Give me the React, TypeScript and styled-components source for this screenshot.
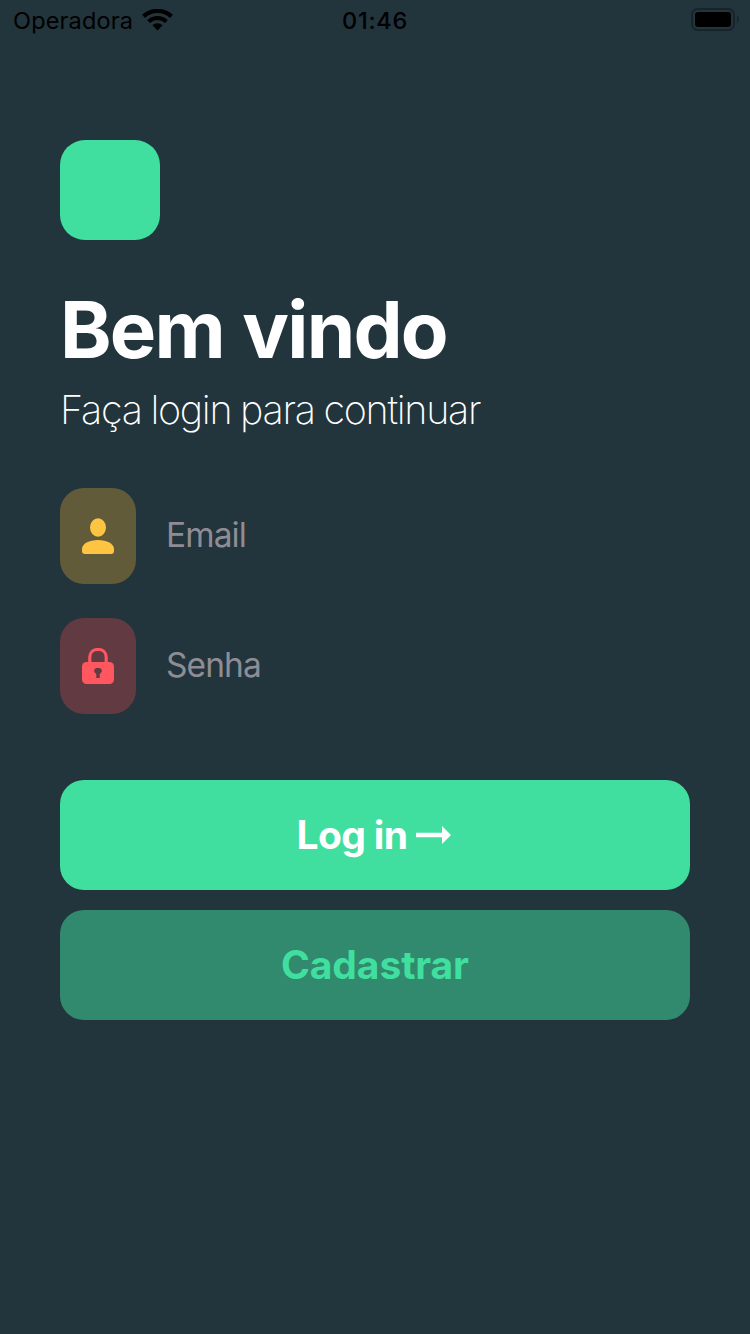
import React from "react";
import styled, { createGlobalStyle } from "styled-components";

const GlobalStyle = createGlobalStyle`
  *, *::before, *::after { box-sizing: border-box; }
  body {
    margin: 0;
    background: #22343c;
    font-family: Inter, "Liberation Sans", sans-serif;
  }
`;

const Screen = styled.div`
  display: flex;
  flex-direction: column;
  width: 750px;
  height: 1334px;
  background: #22343c;
  overflow: hidden;
`;

const StatusBar = styled.header`
  display: grid;
  grid-template-columns: 1fr auto 1fr;
  align-items: center;
  height: 40px;
  padding: 0 11px 0 13px;
  color: #000;
  line-height: 40px;
`;

const Carrier = styled.div`
  display: flex;
  align-items: center;
  gap: 9px;
  font-size: 23.5px;
  letter-spacing: 0.17px;
  padding-top: 1px;

  svg {
    margin-bottom: 2px;
  }
`;

const Clock = styled.time`
  font-size: 23.5px;
  font-weight: 550;
  letter-spacing: 0.7px;
  padding-top: 1px;
  margin-right: 2px;
`;

const BatterySlot = styled.div`
  display: flex;
  justify-content: flex-end;
  padding-bottom: 1px;
`;

const Content = styled.main`
  display: flex;
  flex-direction: column;
  padding: 100px 60px 0;
`;

const Logo = styled.div`
  width: 100px;
  height: 100px;
  border-radius: 25px;
  background: #40df9f;
`;

const Title = styled.h1`
  margin: 42px 0 0;
  color: #fff;
  font-size: 78px;
  font-weight: 700;
  line-height: 95px;
  letter-spacing: -1.75px;
  word-spacing: 1.5px;
`;

const Subtitle = styled.p`
  margin: 9px 0 0;
  color: #fff;
  font-size: 39.5px;
  font-weight: 180;
  line-height: 48px;
  letter-spacing: -1.3px;
  word-spacing: -1px;
  white-space: nowrap;
`;

const Form = styled.form`
  display: flex;
  flex-direction: column;
  margin-top: 54px;
`;

const Fields = styled.div`
  display: flex;
  flex-direction: column;
  gap: 34px;
`;

const Field = styled.label`
  display: flex;
  align-items: center;
  gap: 30px;
  height: 96px;
`;

const IconTile = styled.span<{ $fill: string }>`
  display: flex;
  align-items: center;
  justify-content: center;
  flex: none;
  width: 76px;
  height: 96px;
  border-radius: 24px;
  background: ${({ $fill }) => $fill};
`;

const Input = styled.input`
  flex: 1;
  min-width: 0;
  height: 96px;
  padding: 0 0 2px;
  border: 0;
  outline: 0;
  background: transparent;
  color: #fff;
  font-family: inherit;
  font-size: 33.5px;
  letter-spacing: -0.9px;

  &::placeholder {
    color: #8e8c94;
    opacity: 1;
  }
`;

const Actions = styled.div`
  display: flex;
  flex-direction: column;
  gap: 20px;
  margin-top: 66px;
`;

const Button = styled.button<{ $secondary?: boolean }>`
  display: flex;
  align-items: center;
  justify-content: center;
  gap: 9px;
  height: 110px;
  padding: 0 ${({ $secondary }) => ($secondary ? "0" : "2px")} 0 0;
  border: 0;
  border-radius: 24px;
  background: ${({ $secondary }) => ($secondary ? "#318a6e" : "#40df9f")};
  color: ${({ $secondary }) => ($secondary ? "#40df9f" : "#fff")};
  font-family: inherit;
  font-size: 39px;
  font-weight: ${({ $secondary }) => ($secondary ? 650 : 700)};
  letter-spacing: ${({ $secondary }) => ($secondary ? "-0.1px" : "-0.65px")};
`;

const ButtonLabel = styled.span`
  padding-bottom: 2px;
`;

const WifiIcon = () => (
  <svg width="31" height="22" viewBox="0 0 31 22" fill="none">
    <path d="M1.6 7.4C9.3 .2 21.7 .2 29.4 7.4" stroke="#000" strokeWidth="4.2" />
    <path d="M6.6 12.5C11.6 7.9 19.4 7.9 24.4 12.5" stroke="#000" strokeWidth="4" />
    <path d="M10.4 16.2C13.3 13.5 17.7 13.5 20.6 16.2L15.5 21.5Z" fill="#000" />
  </svg>
);

const BatteryIcon = () => (
  <svg width="49" height="24" viewBox="0 0 49 24">
    <rect x="2" y="1" width="42" height="21" rx="5.8" fill="none" stroke="#17242a" strokeWidth="2" />
    <rect x="5" y="4" width="36" height="15" rx="3" fill="#000" />
    <path d="M47 7.5C49.4 8.5 49.4 14 47 15Z" fill="#17242a" />
  </svg>
);

const PersonIcon = () => (
  <svg width="32" height="36" viewBox="0 0 32 36" fill="#ffc542">
    <ellipse cx="16" cy="9.5" rx="8" ry="9.3" />
    <path d="M0 31C0 25.8 7.2 22 16 22S32 25.8 32 31V33Q32 36 29 36H3Q0 36 0 33Z" />
  </svg>
);

const LockIcon = () => (
  <svg width="32" height="36" viewBox="0 0 32 36">
    <path d="M7.8 15V9C7.8 4.5 11 1.5 16 1.5S24.2 4.5 24.2 9V15" fill="none" stroke="#ff575f" strokeWidth="3.2" />
    <rect y="14" width="32" height="22" rx="4.5" fill="#ff575f" />
    <path d="M14 20H18L19.7 21.5V24L17.7 26V30H14.3V26L12.3 24V21.5Z" fill="#623a42" />
  </svg>
);

const ArrowIcon = () => (
  <svg width="35" height="18" viewBox="0 0 35 18" fill="#fff">
    <path d="M0 6.8H26V0L35 9L26 18V11.2H0Z" />
  </svg>
);

export default function App() {
  return (
    <>
      <GlobalStyle />
      <Screen>
        <StatusBar>
          <Carrier>
            <span>Operadora</span>
            <WifiIcon />
          </Carrier>
          <Clock>01:46</Clock>
          <BatterySlot>
            <BatteryIcon />
          </BatterySlot>
        </StatusBar>
        <Content>
          <Logo />
          <Title>Bem vindo</Title>
          <Subtitle>Faça login para continuar</Subtitle>
          <Form onSubmit={(event) => event.preventDefault()}>
            <Fields>
              <Field>
                <IconTile $fill="#625b39">
                  <PersonIcon />
                </IconTile>
                <Input type="email" placeholder="Email" />
              </Field>
              <Field>
                <IconTile $fill="#623a42">
                  <LockIcon />
                </IconTile>
                <Input type="password" placeholder="Senha" />
              </Field>
            </Fields>
            <Actions>
              <Button type="submit">
                <ButtonLabel>Log in</ButtonLabel>
                <ArrowIcon />
              </Button>
              <Button type="button" $secondary>
                <ButtonLabel>Cadastrar</ButtonLabel>
              </Button>
            </Actions>
          </Form>
        </Content>
      </Screen>
    </>
  );
}
